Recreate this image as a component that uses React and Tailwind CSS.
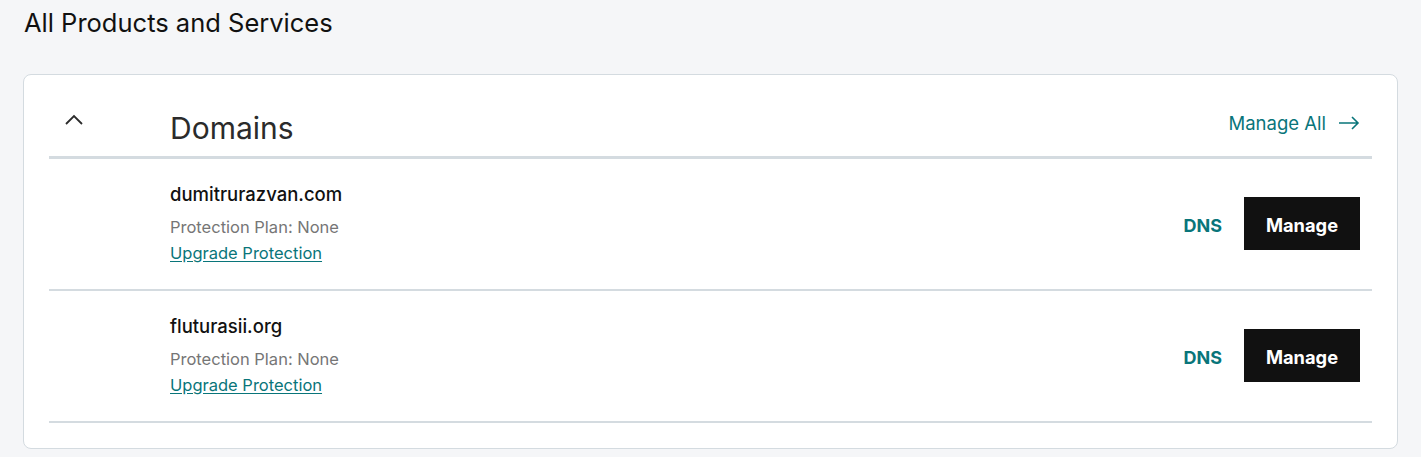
import React from 'react';

const domains = [
  { name: 'dumitrurazvan.com', plan: 'None' },
  { name: 'fluturasii.org', plan: 'None' },
];

function ChevronUp() {
  return (
    <svg width="20" height="12" viewBox="0 0 20 12" fill="none">
      <path d="M2 10 L10 2 L18 10" stroke="#2b2b2b" strokeWidth="1.8" />
    </svg>
  );
}

function ArrowRight() {
  return (
    <svg width="22" height="14" viewBox="0 0 22 14" fill="none">
      <path d="M1 7 H20 M14 1 L20 7 L14 13" stroke="#09757a" strokeWidth="1.6" />
    </svg>
  );
}

export default function App() {
  return (
    <div className="min-h-[457px] bg-[#f5f6f8] px-[23px] pt-[7px] pb-[8px] font-['Inter',sans-serif] text-[#111]">
      <h2 className="text-[25.5px] leading-[32px] text-[#111] pl-[1px]">All Products and Services</h2>

      <div className="mt-[35px] bg-white border border-[#d4dbe0] rounded-lg px-[25px] pb-[25px]">
        {/* Header */}
        <div className="flex items-start h-[84px] border-b-[3px] border-[#d4dbe0]">
          <div className="w-[121px] pt-[39px] pl-[15px]">
            <ChevronUp />
          </div>
          <h3 className="flex-1 pt-[35px] text-[30px] leading-[36px] text-[#2b2b2b]">Domains</h3>
          <a className="pt-[36px] pr-[12px] flex items-center gap-[12px] text-[18.5px] leading-[24px] text-[#09757a]">
            Manage All <ArrowRight />
          </a>
        </div>

        {domains.map((d) => (
          <div key={d.name} className="flex items-center border-b-2 border-[#d4dbe0] pt-[23px] pb-[25px]">
            <div className="w-[121px]" />
            <div className="flex-1">
              <p className="text-[18.5px] leading-[24px] font-medium text-[#111]">{d.name}</p>
              <p className="mt-[10px] text-[16.5px] leading-[22px] text-[#767676]">Protection Plan: {d.plan}</p>
              <a className="mt-[4px] block text-[16.5px] leading-[22px] text-[#09757a] underline underline-offset-2">Upgrade Protection</a>
            </div>
            <a className="mt-[4px] text-[18px] font-bold text-[#09757a] mr-[22px]">DNS</a>
            <button className="w-[116px] h-[53px] mr-[12px] pt-[5px] bg-[#111] text-white text-[18.3px] font-bold">Manage</button>
          </div>
        ))}
      </div>
    </div>
  );
}
